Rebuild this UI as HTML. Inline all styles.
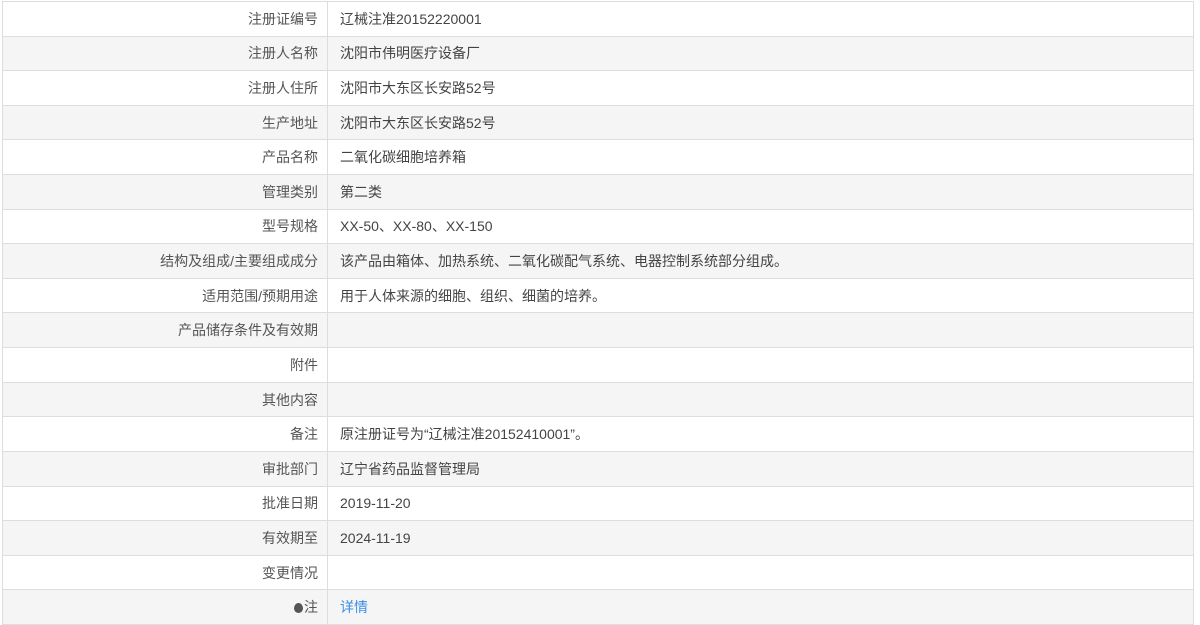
<!DOCTYPE html>
<html><head><meta charset="utf-8"><style>
body{margin:0;background:#fff;width:1200px;height:624px;overflow:hidden;font-family:"Liberation Sans","Noto Sans CJK SC",sans-serif;}
table{position:absolute;left:2px;top:1px;width:1192px;height:624px;border-collapse:collapse;font-size:14px;color:#444;table-layout:fixed;}
td{border:1px solid #ddd;padding:0 12px;line-height:20px;}
td.l{width:307px;text-align:right;padding-right:9px;padding-left:8px;color:#555;}
tr:nth-child(even) td{background:#f5f5f5;}
a{color:#3a8ee6;text-decoration:none;}
.dot{display:inline-block;width:9px;height:10px;background:#555;border-radius:50% 50% 50% 50%/55% 55% 45% 45%;vertical-align:-1px;margin-right:1px;}
</style></head><body>
<table>
<tr><td class="l">注册证编号</td><td>辽械注准20152220001</td></tr>
<tr><td class="l">注册人名称</td><td>沈阳市伟明医疗设备厂</td></tr>
<tr><td class="l">注册人住所</td><td>沈阳市大东区长安路52号</td></tr>
<tr><td class="l">生产地址</td><td>沈阳市大东区长安路52号</td></tr>
<tr><td class="l">产品名称</td><td>二氧化碳细胞培养箱</td></tr>
<tr><td class="l">管理类别</td><td>第二类</td></tr>
<tr><td class="l">型号规格</td><td>XX-50、XX-80、XX-150</td></tr>
<tr><td class="l">结构及组成/主要组成成分</td><td>该产品由箱体、加热系统、二氧化碳配气系统、电器控制系统部分组成。</td></tr>
<tr><td class="l">适用范围/预期用途</td><td>用于人体来源的细胞、组织、细菌的培养。</td></tr>
<tr><td class="l">产品储存条件及有效期</td><td></td></tr>
<tr><td class="l">附件</td><td></td></tr>
<tr><td class="l">其他内容</td><td></td></tr>
<tr><td class="l">备注</td><td>原注册证号为“辽械注准20152410001”。</td></tr>
<tr><td class="l">审批部门</td><td>辽宁省药品监督管理局</td></tr>
<tr><td class="l">批准日期</td><td>2019-11-20</td></tr>
<tr><td class="l">有效期至</td><td>2024-11-19</td></tr>
<tr><td class="l">变更情况</td><td></td></tr>
<tr><td class="l"><span class="dot"></span>注</td><td><a>详情</a></td></tr>
</table>
</body></html>
